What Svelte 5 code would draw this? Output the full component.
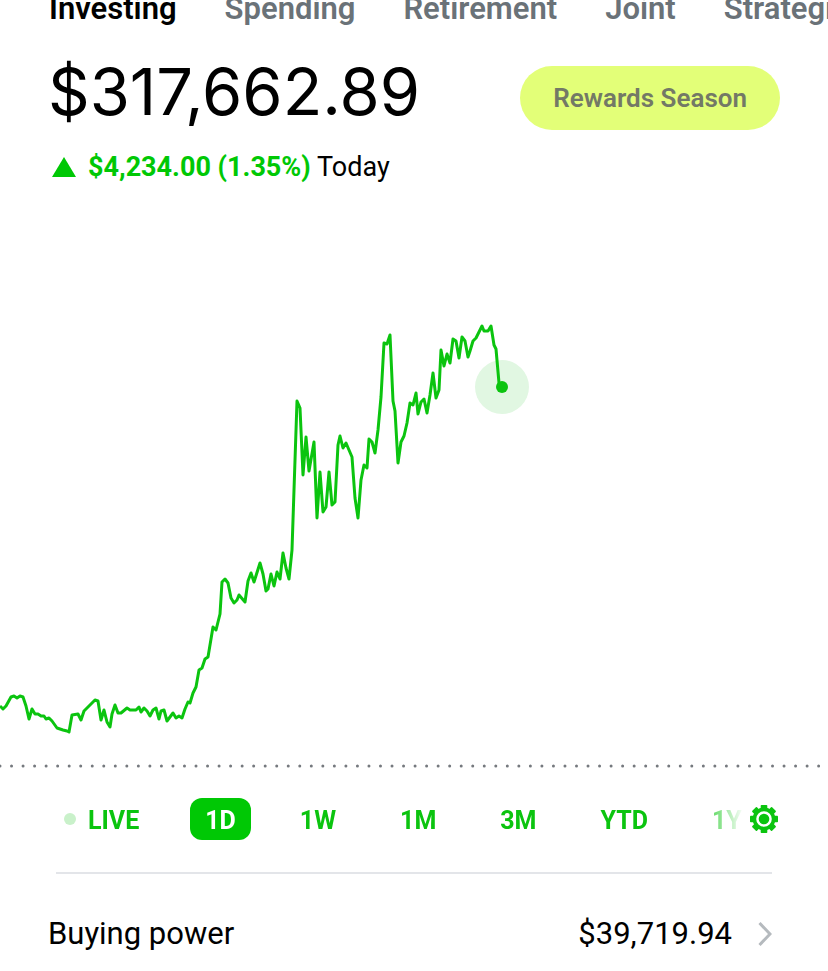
<script>
  const accounts = ['Investing', 'Spending', 'Retirement', 'Joint', 'Strategies']
  const ranges = ['LIVE', '1D', '1W', '1M', '3M', 'YTD', '1Y']

  let account = $state('Investing')
  let range = $state('1D')

  // Intraday line, x/y in chart units
  const points = [
    [0, 706], [3, 709], [6, 706], [11, 697], [14, 696], [17, 698], [20, 696], [23, 697],
    [26, 706], [29, 719], [32, 709], [35, 714], [38, 714], [41, 716], [44, 716], [46, 719],
    [49, 718], [52, 721], [57, 728], [63, 730], [67, 731], [69, 732], [72, 715], [78, 714],
    [81, 720], [84, 711], [90, 705], [95, 700], [98, 701], [101, 720], [104, 710], [107, 722],
    [110, 727], [112, 714], [115, 705], [118, 713], [121, 713], [127, 708], [130, 710],
    [136, 710], [139, 707], [141, 712], [144, 708], [147, 711], [150, 716], [153, 710],
    [156, 708], [159, 719], [161, 711], [164, 710], [167, 721], [170, 717], [173, 713],
    [176, 718], [179, 716], [182, 718], [185, 709], [188, 702], [190, 703], [193, 693],
    [196, 687], [199, 670], [202, 668], [205, 659], [208, 657], [213, 627], [216, 630],
    [220, 614], [222, 582], [225, 579], [228, 583], [231, 598], [234, 603], [237, 600],
    [239, 595], [245, 602], [248, 581], [251, 573], [254, 582], [260, 563], [263, 574],
    [266, 591], [268, 589], [271, 574], [274, 586], [277, 572], [280, 579], [283, 553],
    [286, 568], [289, 579], [292, 550], [294, 490], [297, 401], [300, 408], [303, 475],
    [306, 437], [309, 471], [314, 442], [317, 518], [320, 472], [323, 512], [326, 507],
    [329, 472], [332, 505], [335, 502], [338, 445], [340, 436], [343, 448], [346, 443],
    [352, 457], [355, 498], [358, 518], [361, 480], [364, 465], [367, 468], [369, 439],
    [372, 442], [375, 453], [378, 430], [381, 397], [384, 343], [387, 344], [390, 335],
    [393, 401], [395, 411], [398, 463], [401, 442], [404, 436], [407, 423], [410, 403],
    [413, 405], [416, 393], [418, 414], [421, 402], [424, 399], [427, 413], [430, 395],
    [433, 373], [436, 398], [439, 390], [441, 350], [444, 366], [447, 354], [450, 363],
    [453, 339], [456, 341], [459, 358], [462, 337], [465, 341], [468, 357], [470, 351],
    [473, 341], [476, 338], [482, 326], [484, 331], [488, 331], [491, 326], [494, 345],
    [496, 349], [499, 383], [502, 387],
  ]
  const line = points.map((p) => p.join(',')).join(' ')
  const [lastX, lastY] = points[points.length - 1]
  const teeth = [0, 45, 90, 135, 180, 225, 270, 315]
</script>

<nav class="accounts">
  {#each accounts as name}
    <a href="#{name.toLowerCase()}" class:active={account === name} onclick={() => (account = name)}>{name}</a>
  {/each}
</nav>

<main>
  <header class="summary">
    <h1>$317,662.89</h1>
    <button class="rewards">Rewards Season</button>
  </header>

  <p class="change">
    <svg class="up" viewBox="0 0 24 20" aria-hidden="true"><path d="M12 0 24 20H0z" /></svg>
    <span><strong>$4,234.00 (1.35%)</strong> Today</span>
  </p>

  <svg class="chart" viewBox="0 300 828 480" role="img" aria-label="Portfolio value today">
    <line class="baseline" x1="0" y1="766" x2="828" y2="766" />
    <circle class="halo" cx={lastX} cy={lastY} r="27" />
    <polyline points={line} />
    <circle class="dot" cx={lastX} cy={lastY} r="6" />
  </svg>

  <div class="ranges">
    <div class="scroller">
      {#each ranges as r}
        <button class:live={r === 'LIVE'} class:selected={range === r} onclick={() => (range = r)}>{r}</button>
      {/each}
    </div>
    <button class="settings" aria-label="Chart settings">
      <svg viewBox="-14 -14 28 28">
        {#each teeth as angle}
          <rect x="-3.3" y="-14" width="6.6" height="5" rx="0.8" transform="rotate({angle})" />
        {/each}
        <circle class="ring" r="9.6" />
        <circle r="5.3" />
      </svg>
    </button>
  </div>

  <a class="power" href="#buying-power">
    <span>Buying power</span>
    <span class="amount">$39,719.94</span>
    <svg viewBox="0 0 14 26" aria-hidden="true"><path d="M1.5 2 12 13 1.5 24" /></svg>
  </a>
</main>

<style>
  :global(body) {
    margin: 0;
    background: #fff;
    color: #000;
    font-family: Roboto, sans-serif;
    overflow-x: hidden;
  }
  button {
    box-sizing: border-box;
    border: 0;
    padding: 0;
    background: none;
    font: inherit;
    cursor: pointer;
  }
  a { color: inherit; text-decoration: none; }

  .accounts {
    display: flex;
    align-items: flex-end;
    gap: 48px;
    height: 27px;
    padding-left: 49px;
    overflow: hidden;
    font-size: 31px;
    line-height: 36px;
    font-weight: 600;
    color: #6a7278;
  }
  .accounts .active { color: #000; }

  .summary {
    display: flex;
    justify-content: space-between;
    min-height: 70px;
    margin-top: 33px;
    padding: 0 48px;
  }
  h1 {
    margin: 0;
    font-family: Inter, sans-serif;
    font-size: 65px;
    line-height: 64px;
    font-weight: 400;
  }
  .rewards {
    align-self: flex-end;
    height: 64px;
    padding: 0 33px;
    border-radius: 32px;
    background: #e3ff78;
    color: #737966;
    font-size: 26px;
    font-weight: 600;
  }

  .change {
    display: flex;
    align-items: center;
    gap: 12px;
    margin: 21px 0 0;
    padding: 0 52px;
    font-size: 27px;
    line-height: 32px;
  }
  .change strong { color: #00c805; font-weight: 700; }
  .up { width: 24px; height: 20px; fill: #00c805; }

  .chart { display: block; width: 100%; margin-top: 117px; }
  .chart polyline {
    fill: none;
    stroke: #0bc40f;
    stroke-width: 3;
    stroke-linejoin: round;
  }
  .baseline {
    stroke: #75797e;
    stroke-width: 3;
    stroke-linecap: round;
    stroke-dasharray: 0 11.53;
  }
  .halo { fill: #e1f7e2; }
  .dot { fill: #0bc40f; }

  .ranges {
    display: flex;
    align-items: center;
    gap: 6px;
    margin-top: 18px;
    padding: 0 50px 0 64px;
  }
  .scroller {
    display: flex;
    flex: 1;
    min-width: 0;
    gap: 34px;
    overflow: hidden;
    mask-image: linear-gradient(to left, transparent, #000 50px);
  }
  .scroller button {
    flex: none;
    height: 42px;
    padding: 2px 15px 0;
    border-radius: 12px;
    color: #0bc40f;
    font-size: 25px;
    font-weight: 700;
  }
  .scroller .live {
    display: flex;
    align-items: center;
    gap: 12px;
    padding: 2px 17px 0 0;
  }
  .live::before {
    content: '';
    width: 12px;
    height: 12px;
    margin-bottom: 2px;
    border-radius: 50%;
    background: #c9f1ca;
  }
  .scroller .selected { background: #00c805; color: #fff; }
  .settings { flex: none; width: 28px; height: 28px; }
  .settings svg { display: block; fill: #0bc40f; }
  .settings .ring { fill: none; stroke: #0bc40f; stroke-width: 3.6; }

  .power {
    display: flex;
    align-items: center;
    margin: 32px 56px 0;
    padding: 42px 0 19px;
    border-top: 2px solid #e3e5e9;
    font-size: 31px;
    line-height: 36px;
  }
  .power span:first-child { margin-left: -8px; }
  .amount { margin-left: auto; }
  .power svg {
    width: 14px;
    height: 26px;
    margin-left: 26px;
    fill: none;
    stroke: #b5babe;
    stroke-width: 3;
  }
</style>
